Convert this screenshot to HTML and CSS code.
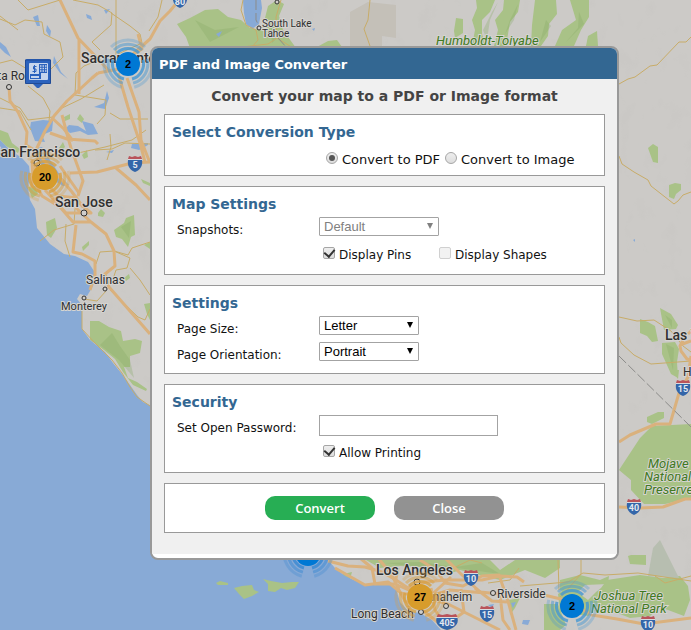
FILE: index.html
```html
<!DOCTYPE html>
<html lang="en">
<head>
<meta charset="utf-8">
<title>PDF and Image Converter</title>
<link rel="stylesheet" href="styles.css">
</head>
<body>
<svg class="map" viewBox="0 0 691 630" preserveAspectRatio="xMinYMin slice" aria-label="Map of California">
  <defs>
    <g id="rings" fill="none" stroke-width="3">
      <g id="arc">
        <path d="M-11-11A15.500 15.500 0 0 1 11-11" stroke-opacity=".8"/>
        <path d="M-14-14A19.800 19.800 0 0 1 14-14" stroke-opacity=".5"/>
        <path d="M-17-17A24 24 0 0 1 17-17" stroke-opacity=".3"/>
      </g>
      <use href="#arc" transform="rotate(120)"/>
      <use href="#arc" transform="rotate(240)"/>
    </g>
    <g id="shield">
      <path d="M-7-3H7C8 3 5 7 0 9C-5 7-8 3-7-3Z" fill="#3466a9"/>
      <path d="M-6-7L-3-6L0-7L3-6L6-7L7-4H-7Z" fill="#b9535a"/>
      <path d="M-7-3.500H7" stroke="#d8dbe0" stroke-width="1"/>
    </g>
    <filter id="grain" x="0" y="0" width="100%" height="100%">
      <feTurbulence type="fractalNoise" baseFrequency=".06 .04" numOctaves="3" seed="8"/>
      <feColorMatrix values="0 0 0 0 .5  0 0 0 0 .5  0 0 0 0 .48  0 0 0 -5 2.100"/>
    </filter>
  </defs>
  <rect width="691" height="630" fill="#cccac7"/>
  <rect width="691" height="630" filter="url(#grain)" opacity=".1"/>

  <g fill="#c4c0b8">
    <path d="M350 12L368 2L396 5L396 38L382 36L382 46H350Z"/>
  </g>

  <g fill="#a9c287">
    <path d="M177 24L190 18L205 10L218 9L228 17L241 20L250 28L262 30L268 6L277 0L284 4L279 16L283 30L296 48H190L186 37L181 30Z"/>
    <path d="M317 47L328 41L337 40L342 47Z"/>
    <path d="M454 31L456 18L463 19L463 33L455 38Z"/>
    <path d="M476 0H495L490 12L482 20L482 34L486 46H472L475 30L472 20L477 8Z"/>
    <path d="M504 0H520L518 12L510 22L506 46H494L498 30L495 20L503 10Z"/>
    <path d="M535 0H556L557 14L549 24L548 36L541 46H531L532 25Z"/>
    <path d="M570 0H589V17L581 30L574 46H555L562 30L576 20Z"/>
    <path d="M588 36L597 31L598 46H586Z"/>
    <path d="M648 148L653 144L658 147V163L653 162Z"/>
    <path d="M669 185L675 183L681 184L681 190L676 194L674 199L669 197Z"/>
    <path d="M640 319L648 322L655 326L658 341L652 342L647 336L640 333Z"/>
    <path d="M660 308L671 314L678 325L676 329L664 330Z"/>
    <path d="M662 343L675 342L679 349L677 362L678 378L671 374L662 354Z"/>
    <path d="M672 370H679L678 379Z"/>
    <path d="M647 417L658 412L664 412V418L652 424L647 422Z"/>
    <path d="M619 470L640 438L652 426L672 425L691 424V498L665 504L644 504L631 490L631 480Z"/>
    <path d="M628 556L631 555H646V565L630 564Z"/>
    <path d="M0 130L8 133L12 143L20 149L18 153L6 146L0 140Z"/>
    <path d="M46 222L55 218L57 228L51 238L47 235Z"/>
    <path d="M82 247L89 241L89 245L83 251Z"/>
    <path d="M98 213L101 209L105 213L103 217L98 216Z"/>
    <path d="M114 230L124 223L126 218L134 215L135 235L131 237L128 247L122 239L116 237Z"/>
    <path d="M144 245L150 242V249Z"/><path d="M124 278L129 274L130 278L126 281Z"/>
    <path d="M144 304L150 303V320L147 314Z"/>
    <path d="M90 321L99 321L109 327L121 331L123 341L135 339L142 341L140 353L130 356L130 367L124 367L128 378L137 382L147 389L146 391L133 385L123 372L115 359L104 350L90 340Z"/>
    <path d="M80 114L84 119L82 123L77 119Z"/><path d="M82 155L87 150L88 157L84 159Z"/>
    <path d="M28 187L35 186L38 194L32 198Z"/><path d="M64 117L70 114V119L65 121Z"/>
    <path d="M59 148L63 142L65 147L61 151Z"/><path d="M141 179L150 183V186L143 183Z"/>
    <path d="M366 560L370 550H480L500 570L515 560L520 550H560V568L545 578L525 570L500 580L460 570L440 577L420 567L400 566L380 568Z"/>
    <path d="M560 580L580 575L600 580L609 576L608 584L585 585L575 595L560 590Z"/>
    <path d="M558 594L569 586L588 600L596 592L601 588L607 580L640 575L663 578L680 576L688 586L690 600L684 616L660 607L650 616L630 618L600 606L588 616L560 612Z"/>
    <path d="M544 604H558L566 625L560 630H544Z"/>
    <path d="M509 600L520 598L515 608L510 615Z"/>
    <path d="M343 574L352 572L350 579L342 579Z"/>
  </g>
  <g fill="#86aa62" opacity=".3">
    <path d="M483 30L492 12L498 2L490 20L487 40ZM505 34L510 20L518 4L514 20ZM540 42L546 20L551 26ZM566 42L578 28L579 12L584 24Z"/>
    <path d="M121 227L131 221L129 238ZM100 345L112 333L120 346L130 360L134 378L119 360ZM195 20L215 30L239 27L210 42ZM270 20L280 35L272 43Z"/>
    <path d="M385 563L420 562L455 567L482 563L500 574L450 567L410 566ZM665 315L672 320L672 328ZM666 344L674 348L673 370Z"/>
  </g>
  <path d="M660 540L679 578L648 576L653 548Z" fill="#b7beb0"/>

  <g fill="#88aad6">
    <path d="M0 140L10 150L22 158L29 166L30 175L28 188L30 200L35 209L37 228L50 244L64 254L75 256L88 262L96 274L93 286L87 296L80 294L77 299L82 305L82 329L90 340L105 352L113 363L122 374L130 385L137 395L143 402L160 410V545H320L328 560L335 568L345 576L365 585L388 583L396 589L400 602L408 611L420 613L432 620L441 630H0Z"/>
    <path d="M30 128L31 122L43 120L53 121L52 131L42 135L45 142L35 141Z"/>
    <path d="M65 129L69 125L78 126L86 131L82 121L93 124L98 134L88 135L80 131L70 133Z"/>
    <path d="M36 148L42 147L50 160L62 178L69 185L63 186L50 178L42 168Z"/>
    <path d="M243 0H261L262 8L259 24L252 29L246 24L244 13Z"/>
    <path d="M94 107L104 103L107 91L109 98L105 109Z"/>
    <path d="M33 17L38 15L40 26L37 26ZM54 56L61 72L68 79L60 73L53 63ZM86 14L91 16L92 20L87 18ZM104 10L110 9L106 14Z"/>
    <path d="M0 42L6 47L11 57L5 53L0 48ZM47 25L51 31L50 37L46 31ZM114 58L120 66L127 73L118 71Z"/>
    <path d="M132 144L148 143V145L139 150L131 148ZM106 152L114 150L112 153ZM216 34L222 31L219 37ZM633 240L635 239L635 242Z"/>
    <path d="M523 620L530 620L528 625L522 624ZM511 603L516 602L513 608ZM488 605L494 604L492 608ZM312 29L315 28L314 31Z"/>
  </g>
  <g fill="#a9c287">
    <path d="M216 583L220 581L228 583V585L218 585Z"/>
    <path d="M234 588L242 586L252 585L254 590L259 592L252 596L244 599L239 594Z"/>
    <path d="M263 579L271 581L282 583L292 582L299 582L295 588L287 590L281 588L275 592L268 591L268 584Z"/>
  </g>

  <g class="minor">
    <path d="M0 19L15 25L25 20L42 22L44 34L60 42L63 57L50 70L32 72L12 60L0 63"/>
    <path d="M18 0L28 10L60 0M73 0L98 5L112 13L111 25L92 42L100 50M111 13L130 26L140 34L142 43L116 55"/>
    <path d="M116 0V55M162 0L158 17L149 31M0 16L18 30M99 60L84 66L76 73L75 95L106 100L105 115L97 124"/>
    <path d="M28 86L43 98L50 111L49 121M62 108L81 99L104 85M0 98L20 108L28 120L53 117"/>
    <path d="M110 113L120 119L148 119M95 150L112 149L125 143L150 144M107 160L111 147L110 134M78 153L105 147L132 140L146 130"/>
    <path d="M40 241L54 230L74 224L75 209M70 257L65 241L66 224M96 264L100 252L114 251L130 258L127 268L116 270L113 279"/>
    <path d="M114 251L128 255L132 248L150 242M130 268L140 280L150 295M110 290L138 317L145 320L150 309M84 299L97 301L106 291"/>
    <path d="M82 303V329L94 342L112 360L122 373L130 387L137 397L150 406"/>
    <path d="M243 0L241 10L246 25L256 30L258 40L252 47M281 0L276 17L277 38L293 48M277 38L268 44L242 47M370 0L368 20L364 29L370 46"/>
    <path d="M619 84L628 79L635 77L650 66L657 65L679 42L686 42L691 37M619 156L622 164L634 172L648 180L651 186L674 204L678 201L683 195L691 192"/>
    <path d="M619 317L637 321L654 320L671 331L683 346L691 352M619 337L621 343L634 355L651 364L691 361"/>
    <path d="M520 586L568 582L583 573L605 575L638 573L691 581M581 555V574L567 590L560 597M558 560L559 590M655 576L665 583L691 576"/>
    <path d="M443 573L470 560L482 563M488 583L510 580L519 568M0 108L20 111L31 130"/>
  </g>
  <g class="major">
    <path d="M60 0L78 38L99 60L109 71M79 39V94M9 87L10 101L18 112L27 132L26 145L36 151L39 163"/>
    <path d="M98 73L92 78L67 101L54 116L45 131L36 150L50 168L62 180L72 192L83 207M62 115L67 134L71 148L83 181L78 196"/>
    <path d="M50 133L67 139L95 141L98 144M52 118L64 129L73 141M98 73L119 69L127 61L134 53L150 39L160 21L170 11L179 0M138 34L142 49L134 54"/>
    <path d="M118 73L128 107L140 143L145 162M127 78L139 112L141 140L150 163M70 173L97 172L132 163L150 162M116 168L136 185L150 200"/>
    <path d="M32 159L33 179L42 196L60 207L73 222L91 222L106 234L114 251L115 266L105 274L109 287L150 334M45 190L66 213L91 213L77 201M91 222L75 207"/>
    <path d="M37 161L32 179L32 188M60 166L79 193M76 225L73 252L82 254L95 261L95 275L90 290M48 185L58 196L78 198"/>
    <path d="M619 442L630 435L656 424L670 424L679 393L688 377L691 356M619 507L640 508L663 507L685 499L691 499"/>
    <path d="M683 340L680 346L681 351L687 359L691 360M680 345L691 341M688 334L691 331"/>
    <path d="M328 561L348 566L365 567L382 572L396 580L408 588L425 582L445 580L482 580L500 576L517 577L524 582"/>
    <path d="M360 558L372 568L375 584L395 584M378 558L392 575L399 590L405 601L425 612L440 624M398 568L395 584L420 595L450 605L480 620L500 630"/>
    <path d="M420 560L436 570L445 583L463 586L482 576L499 575L508 601L516 630M445 558L461 574L480 592L510 595L544 595L565 600L592 615L617 619L644 624L691 618"/>
    <path d="M400 593L427 597L450 590L485 593M431 588L435 610L449 630M461 589L464 612L450 622M475 588L492 601L507 602M407 608L428 598L451 577M500 595L503 620L510 630"/>
    <path d="M335 568L365 585L388 582L400 592"/>
  </g>
  <g class="rail"><path d="M619 356L691 427M256 0V20L259 26M278 38L287 48"/></g>

  <g class="place">
    <g class="dots"><circle cx="9" cy="87" r="2.500"/><circle cx="37" cy="163" r="3"/><circle cx="84" cy="213" r="3"/><circle cx="105" cy="289" r="2"/><circle cx="84" cy="298" r="2"/><circle cx="259" cy="28" r="2"/><circle cx="277" cy="2" r="2"/><circle cx="417" cy="582" r="3"/><circle cx="421" cy="612" r="2.500"/><circle cx="446" cy="606" r="2.500"/><circle cx="493" cy="593" r="2.500"/></g>
    <g class="city">
      <text x="81" y="63">Sacramento</text>
      <text x="-8" y="157">San Francisco</text>
      <text x="55" y="207">San Jose</text>
      <text x="376" y="575">Los Angeles</text>
      <text x="665" y="340">Las Vegas</text>
    </g>
    <g class="town">
      <text x="-23" y="80">Santa Rosa</text>
      <text x="86" y="284">Salinas</text>
      <text x="351" y="618">Long Beach</text>
      <text x="497" y="598">Riverside</text>
      <text x="425" y="601">Anaheim</text>
      <text x="683" y="376">Henderson</text>
    </g>
    <g class="village">
      <text x="61" y="310">Monterey</text>
    </g>
    <g class="hamlet">
      <text x="262" y="27">South Lake</text><text x="262" y="37">Tahoe</text>
    </g>
    <g class="forest">
      <text x="436" y="45">Humboldt-Toiyabe</text>
      <text x="648" y="468">Mojave</text><text x="644" y="481">National</text><text x="644" y="494">Preserve</text>
      <text x="594" y="600">Joshua Tree</text><text x="591" y="613">National Park</text>
    </g>
  </g>

  <g class="route">
    <use href="#shield" x="135" y="163"/><text x="135" y="168">5</text>
    <use href="#shield" x="180" y="-1"/><text x="180" y="5">80</text>
    <use href="#shield" x="683" y="387"/><text x="683" y="392">15</text>
    <use href="#shield" x="634" y="506"/><text x="634" y="511">40</text>
    <use href="#shield" x="471" y="577"/><text x="471" y="582">10</text>
    <use href="#shield" x="487" y="613"/><text x="487" y="618">15</text>
    <use href="#shield" x="648" y="623"/><text x="648" y="628">10</text>
    <use href="#shield" transform="translate(447 621) scale(1.500 1)"/><text x="447" y="626">405</text>
  </g>

  <g class="cluster">
    <g transform="translate(128 64)"><use href="#rings" stroke="#4496d2"/><circle r="12" fill="#0078d4"/><text y="4">2</text></g>
    <g transform="translate(45 177)"><use href="#rings" stroke="#d6a044"/><circle r="13" fill="#d79c2b"/><text y="4">20</text></g>
    <g transform="translate(308 553)"><use href="#rings" stroke="#3888d2"/><circle r="13" fill="#0078d4"/></g>
    <g transform="translate(420 597)"><use href="#rings" stroke="#d6a044"/><circle r="13" fill="#d79c2b"/><text y="4">27</text></g>
    <g transform="translate(572 606)"><use href="#rings" stroke="#4496d2"/><circle r="12" fill="#0078d4"/><text y="4">2</text></g>
  </g>

  <g transform="translate(25 59)">
    <path d="M2 0H24Q26 0 26 2V23Q26 25 24 25H18L14 29H12L8 25H2Q0 25 0 23V2Q0 0 2 0Z" fill="#2b62bd"/>
    <path d="M.500 1H25.500V24.500H.500Z" fill="none" stroke="#204b96"/>
    <path d="M4.500 4.500H22.500V20.500H4.500Z" fill="#2b62bd" stroke="#c6d5ed"/>
    <path d="M5 5H14V15H5Z" fill="#c6d5ed"/>
    <path d="M11.500 7.500H8.500V10H11V12.500H7.500M9.500 6V14" fill="none" stroke="#2b62bd"/>
    <path d="M15 7H22M15 9.500H22M15 12H22" stroke="#c6d5ed" stroke-width="1.500" stroke-dasharray="1.500 1"/>
    <path d="M6 18H14" stroke="#c6d5ed" stroke-width="2"/><path d="M16 14H22V20H16Z" fill="#c6d5ed"/>
  </g>
</svg>

<main class="stage">
  <form class="dialog" role="dialog" aria-labelledby="dialog-title">
    <h1 class="dialog-title" id="dialog-title">PDF and Image Converter</h1>
    <div class="dialog-body">
      <p class="lead">Convert your map to a PDF or Image format</p>

      <section class="panel panel-tight">
        <h2 class="panel-title">Select Conversion Type</h2>
        <div class="choices choices-radio">
          <label class="choice"><input type="radio" name="type" checked>Convert to PDF</label>
          <label class="choice"><input type="radio" name="type">Convert to Image</label>
        </div>
      </section>

      <section class="panel">
        <h2 class="panel-title">Map Settings</h2>
        <div class="row">
          <label class="row-label" for="snapshots">Snapshots:</label>
          <span class="select select-wide is-disabled"><select id="snapshots" disabled><option>Default</option></select></span>
        </div>
        <div class="choices">
          <label class="choice choice-column"><input type="checkbox" checked>Display Pins</label>
          <label class="choice"><input type="checkbox" disabled>Display Shapes</label>
        </div>
      </section>

      <section class="panel panel-tight">
        <h2 class="panel-title">Settings</h2>
        <div class="row">
          <label class="row-label" for="page-size">Page Size:</label>
          <span class="select"><select id="page-size"><option>Letter</option></select></span>
        </div>
        <div class="row">
          <label class="row-label" for="orientation">Page Orientation:</label>
          <span class="select"><select id="orientation"><option>Portrait</option></select></span>
        </div>
      </section>

      <section class="panel">
        <h2 class="panel-title">Security</h2>
        <div class="row">
          <label class="row-label" for="password">Set Open Password:</label>
          <input class="field" id="password" type="password">
        </div>
        <div class="choices">
          <label class="choice"><input type="checkbox" checked>Allow Printing</label>
        </div>
      </section>

      <div class="panel actions">
        <button class="button button-primary" type="button">Convert</button>
        <button class="button" type="button">Close</button>
      </div>
    </div>
  </form>
</main>
</body>
</html>
```

FILE: styles.css
```css
* { box-sizing: border-box; }

body {
  margin: 0;
  min-height: 100vh;
  background: #88aad6;
  color: #111;
  font: 12px/16px "DejaVu Sans", sans-serif;
}

/* Map backdrop */
.map {
  position: fixed;
  inset: 0;
  width: 100%;
  height: 100%;
}

.minor { fill: none; stroke: #c8ac68; stroke-width: 1; stroke-linejoin: round; }
.major { fill: none; stroke: #dab17d; stroke-width: 3; stroke-linejoin: round; }
.rail { fill: none; stroke: #8b8b89; stroke-width: 1; stroke-dasharray: 10 3; }

.map text { font-family: Roboto, sans-serif; }
.place text { fill: #303030; stroke: #d6d4d0; stroke-width: 2px; paint-order: stroke; }
.dots { fill: #d0cecb; stroke: #333; stroke-width: 1; }
.city { font-size: 14px; font-weight: 500; }
.town { font-size: 12px; }
.village { font-size: 11px; }
.hamlet { font-size: 10px; }
.place .forest text { font-size: 13px; font-style: italic; fill: #3f7a22; }
.route text { font-size: 9px; font-weight: 700; fill: #e4e9f0; text-anchor: middle; }
.cluster text { font-family: "Liberation Sans", sans-serif; font-size: 11px; font-weight: 700; text-anchor: middle; }

/* Dialog */
.stage {
  position: relative;
  padding: 46px 72px 0 150px;
}

.dialog {
  margin: 0;
  padding-bottom: 4px;
  overflow: hidden;
  border: 2px solid #999;
  border-radius: 8px;
  background: #fff;
}

.dialog-title {
  margin: 0;
  padding: 9px 7px 6px;
  background: #336792;
  color: #fff;
  font-size: 13px;
  line-height: 16px;
}

.dialog-body {
  display: flex;
  flex-direction: column;
  gap: 10px;
  padding: 8px 12px 21px;
  background: #f0f0f0;
}

.lead {
  margin: 0 0 -1px;
  color: #444;
  font-size: 14px;
  font-weight: 700;
  line-height: 18px;
  text-align: center;
}

.panel {
  padding: 8px 7px;
  border: 1px solid #999;
  background: #fff;
}

.panel-tight { padding-bottom: 5px; }

.panel-title {
  margin: 0 0 4px;
  color: #336792;
  font-size: 14px;
  line-height: 18px;
}

.row {
  display: flex;
  align-items: flex-start;
  height: 26px;
  padding-left: 5px;
}

.row-label { width: 142px; padding-top: 5px; }

.choices {
  display: flex;
  align-items: center;
  min-height: 23px;
  padding-left: 151px;
}

.choices-radio {
  gap: 5px;
  min-height: 25px;
  padding-top: 5px;
  padding-left: 154px;
  font-size: 13px;
}

.choice { display: flex; align-items: center; gap: 4px; }
.choice-column { width: 116px; }

.choice input {
  flex: none;
  display: grid;
  place-items: center;
  width: 12px;
  height: 12px;
  margin: 0 0 4px;
  appearance: none;
  border: 1px solid #a6a6a6;
  border-radius: 2px;
  background: linear-gradient(#eee, #ddd);
}

.choice input[type="radio"] { border-radius: 50%; }

.choice input[type="radio"]:checked::before {
  content: "";
  width: 6px;
  height: 6px;
  border-radius: 50%;
  background: #555;
}

.choice input[type="checkbox"]:checked::before {
  content: "";
  width: 5px;
  height: 8px;
  margin-top: -2px;
  border: solid #333;
  border-width: 0 2px 2px 0;
  transform: rotate(40deg);
}

.choice input:disabled { border-color: #d0d0d0; background: #f2f2f2; }

.select { position: relative; width: 100px; }
.select-wide { width: 120px; }

.select select {
  display: block;
  width: 100%;
  height: 19px;
  padding: 0 4px;
  appearance: none;
  border: 1px solid #a3a3a3;
  border-radius: 1px;
  background: #fff;
  color: #000;
  font: 13px/16px "Liberation Sans", sans-serif;
}

.select::after {
  content: "";
  position: absolute;
  top: 6px;
  right: 6px;
  border: solid transparent;
  border-width: 6px 3px 0;
  border-top-color: #000;
  pointer-events: none;
}

.is-disabled select { color: #808080; opacity: 1; }
.is-disabled::after { border-top-color: #808080; }

.field {
  width: 179px;
  height: 21px;
  padding: 1px 4px;
  border: 1px solid #a3a3a3;
  background: #fff;
}

.actions {
  display: flex;
  justify-content: center;
  gap: 19px;
  padding: 12px;
}

.button {
  width: 110px;
  height: 24px;
  padding: 0;
  border: 0;
  border-radius: 10px;
  background: #929292;
  color: #fff;
  font: 600 13px/24px "Open Sans", sans-serif;
}

.button-primary { background: #27ae54; }
```
